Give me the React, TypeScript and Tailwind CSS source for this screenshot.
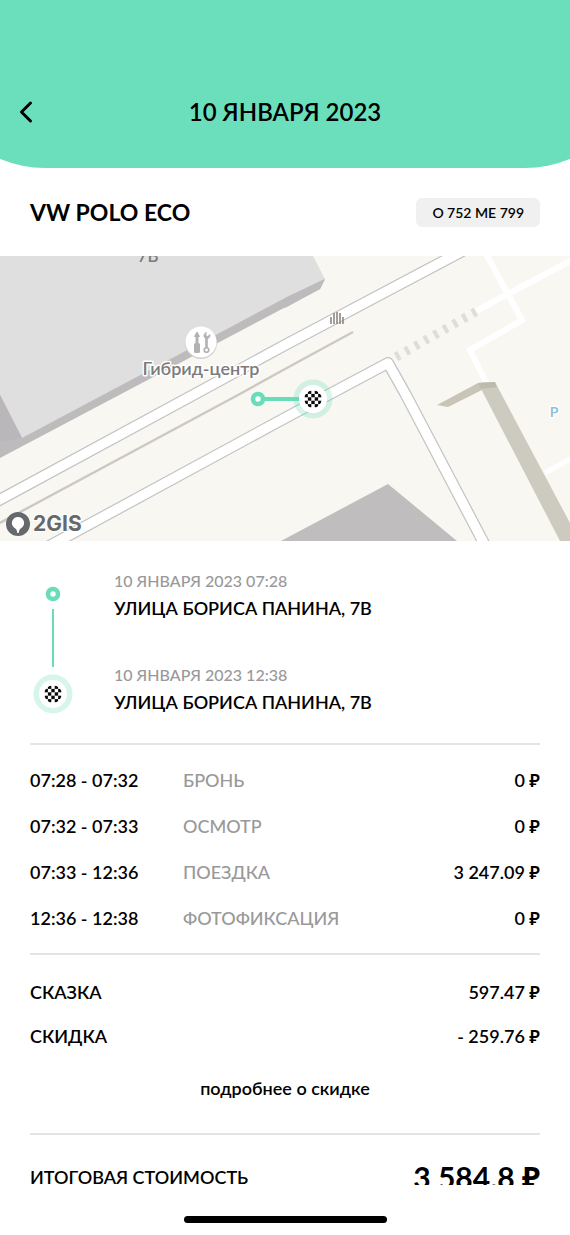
import { ChevronLeft } from "lucide-react";

const periods = [
  { time: "07:28 - 07:32", name: "БРОНЬ", price: "0 ₽" },
  { time: "07:32 - 07:33", name: "ОСМОТР", price: "0 ₽" },
  { time: "07:33 - 12:36", name: "ПОЕЗДКА", price: "3 247.09 ₽" },
  { time: "12:36 - 12:38", name: "ФОТОФИКСАЦИЯ", price: "0 ₽" },
];

const extras = [
  { name: "СКАЗКА", price: "597.47 ₽" },
  { name: "СКИДКА", price: "- 259.76 ₽" },
];

// checkered finish ball, drawn around 0,0
function FinishMark({ id }: { id: string }) {
  const cells = [];
  for (let row = 0; row < 5; row++) {
    for (let col = 0; col < 5; col++) {
      if ((row + col) % 2 === 1) {
        cells.push(
          <rect key={`${row}-${col}`} x={col * 3.4 - 8.5} y={row * 3.4 - 8.5} width="3.4" height="3.4" />
        );
      }
    }
  }
  return (
    <g>
      <circle r="19.5" fill="#6bdfbc" fillOpacity="0.28" />
      <circle r="14" fill="#fff" />
      <clipPath id={id}>
        <circle r="8.8" />
      </clipPath>
      <g clipPath={`url(#${id})`} fill="#0b0b0b">
        {cells}
      </g>
    </g>
  );
}

function TripMap() {
  return (
    <svg
      className="block h-[285px] w-full bg-[#f8f7f2]"
      viewBox="0 0 570 285"
      preserveAspectRatio="xMidYMid slice"
      role="img"
      aria-label="Карта поездки"
    >
      <rect width="570" height="285" fill="#f8f7f2" />

      {/* buildings */}
      <path d="M0 130 325 23 320 33 0 202Z" fill="#bdbbbc" />
      <path d="M0 0H313L325 23 285 42 22 182 0 139Z" fill="#dfdfdf" />
      <path d="M0 139 22 182 0 186Z" fill="#b9b7b9" />
      <path d="M285 42 325 23 320 33 285 52Z" fill="#bdbbbd" />
      <path d="M281 285 388 228 457 285Z" fill="#bfbdbe" />

      {/* footpaths */}
      <g fill="none" stroke="#fff" strokeWidth="6">
        <path d="M486-2 522 64 470 94 488 130" />
        <path d="M476 55 508 38 572 4" />
        <path d="M545 217 572 202" strokeWidth="5" />
      </g>
      <path d="M396 101 477 55" stroke="#dfddda" strokeWidth="9" strokeDasharray="4 7" />

      {/* roads */}
      <path d="M-4 269 238 139 285 113 353 76" fill="none" stroke="#cdc8c1" strokeWidth="2.4" />
      <g fill="none" strokeLinejoin="round">
        <path d="M-10 249 195 138 285 89 472-10M40 295 285 162 388 107 406 139 488 295" stroke="#c3c2c4" strokeWidth="12" />
        <path d="M-10 249 195 138 285 89 472-10M40 295 285 162 388 107 406 139 488 295" stroke="#fff" strokeWidth="9.6" />
      </g>

      {/* fence */}
      <path d="M437 149 478 127 495 126 482 134 448 151Z" fill="#c8c5b8" />
      <path d="M478 127 495 126 570 267V285H560Z" fill="#cdcbbf" />
      <path d="M478 127 495 126 497 131 481 133Z" fill="#bdbaae" />

      <g stroke="#8f8681" strokeWidth="1.6">
        <path d="M331 61V68M334 57V68M337 56V68M340 57V68M343 61V68" />
      </g>

      {/* car service */}
      <circle cx="201" cy="87" r="16" fill="#cfcfcf" />
      <circle cx="201" cy="86" r="15.5" fill="#fff" />
      <g fill="#b3b1b1" stroke="#b3b1b1">
        <path d="M197 76 199.5 80.5H198V87H196V80.5H194.5Z" strokeWidth="1" />
        <rect x="194" y="87" width="6" height="10" rx="1.5" stroke="none" />
        <path d="M206.5 82V92" strokeWidth="2.6" />
        <circle cx="206.5" cy="94" r="2.3" fill="#fff" strokeWidth="1.6" />
        <path d="M206.5 76.5C203.5 77 203 81 205.5 82.5H208C209.8 81.5 210.3 80 210 78.5L207.5 80.5 205.8 79Z" strokeWidth="0.6" />
      </g>
      <g fontFamily="Lato, 'Noto Sans', sans-serif" fill="#7d7b7c">
        <text x="201" y="119" fontSize="18" fontWeight="600" textAnchor="middle" stroke="#fff" strokeWidth="3" paintOrder="stroke" strokeLinejoin="round">
          Гибрид-центр
        </text>
        <text x="148" y="6" fontSize="17" textAnchor="middle">7В</text>
        <text x="554" y="161" fontSize="14" fontWeight="700" textAnchor="middle" fill="#90bfdc" stroke="#fff" strokeWidth="3" paintOrder="stroke">P</text>
      </g>

      {/* trip track */}
      <path d="M258 143H300" stroke="#6bdcb9" strokeWidth="4" />
      <circle cx="258" cy="143" r="5" fill="#fff" stroke="#6bdcb9" strokeWidth="4.6" />
      <g transform="translate(313 143)">
        <FinishMark id="map-finish" />
      </g>

      {/* 2GIS */}
      <circle cx="18" cy="268" r="12" fill="#65696b" />
      <path d="M18 261A6 6 0 0 0 14 271.5C16 272.6 17 274 17.3 277H18.7C19 274 20 272.6 22 271.5A6 6 0 0 0 18 261Z" fill="#fff" />
      <text x="33" y="275" fontSize="21" fontWeight="700" fontFamily="Inter, sans-serif" fill="#65696b" stroke="#fff" strokeWidth="2" paintOrder="stroke">
        2GIS
      </text>
    </svg>
  );
}

export default function App() {
  return (
    <div className="overflow-hidden bg-white font-[Lato,'Noto_Sans',sans-serif] text-lg leading-6 font-semibold text-black">
      <header className="-mx-[72px] rounded-b-[117px] bg-[#6bdfbc] px-[72px] pt-[92px] pb-9">
        <div className="grid h-10 grid-cols-[56px_1fr_56px] items-center">
          <button type="button" aria-label="Назад" className="flex h-10 items-center pl-2">
            <ChevronLeft size={36} strokeWidth={2} />
          </button>
          <h1 className="text-center text-2xl">10 ЯНВАРЯ 2023</h1>
        </div>
      </header>

      <section className="flex h-[88px] items-center justify-between px-[30px]">
        <h2 className="text-[23px] font-bold">VW POLO ECO</h2>
        <span className="rounded-md bg-[#f0f0f0] px-4 py-1 text-sm leading-[21px]">О 752 МЕ 799</span>
      </section>

      <TripMap />

      <main className="px-[30px]">
        <section className="flex gap-[38px] border-b-2 border-[#e4e4e4] pt-7 pb-7">
          <svg className="w-[46px] shrink-0" height="146" viewBox="0 0 46 146" aria-hidden="true">
            <circle cx="23" cy="25" r="5" fill="#fff" stroke="#6bdcb9" strokeWidth="4.6" />
            <path d="M23 40V98" stroke="#6bdcb9" strokeWidth="2" />
            <g transform="translate(23 125)">
              <FinishMark id="list-finish" />
            </g>
          </svg>
          <ol className="space-y-[43px]">
            <li>
              <p className="text-base leading-6 font-medium text-[#999]">10 ЯНВАРЯ 2023 07:28</p>
              <p className="pt-[3px]">УЛИЦА БОРИСА ПАНИНА, 7В</p>
            </li>
            <li>
              <p className="text-base leading-6 font-medium text-[#999]">10 ЯНВАРЯ 2023 12:38</p>
              <p className="pt-[3px]">УЛИЦА БОРИСА ПАНИНА, 7В</p>
            </li>
          </ol>
        </section>

        <section className="border-b-2 border-[#e4e4e4] py-3">
          <table className="w-full">
            <tbody>
              {periods.map((period) => (
                <tr key={period.time} className="h-[46px]">
                  <td className="w-[153px]">{period.time}</td>
                  <td className="font-medium text-[#999]">{period.name}</td>
                  <td className="text-right">{period.price}</td>
                </tr>
              ))}
            </tbody>
          </table>
        </section>

        <section className="border-b-2 border-[#e4e4e4] pt-[15px] pb-[33px]">
          <dl>
            {extras.map((item) => (
              <div key={item.name} className="flex h-11 items-center justify-between">
                <dt>{item.name}</dt>
                <dd>{item.price}</dd>
              </div>
            ))}
          </dl>
          <div className="pt-[18px] text-center">
            <a href="#discount">подробнее о скидке</a>
          </div>
        </section>

        <section className="flex h-[50px] items-start justify-between overflow-hidden pt-[30px]">
          <p>ИТОГОВАЯ СТОИМОСТЬ</p>
          <p className="text-3xl leading-6 font-bold">3 584.8 ₽</p>
        </section>
      </main>

      <footer className="flex justify-center pt-[31px] pb-3">
        <div className="h-[7px] w-[203px] rounded-full bg-black" />
      </footer>
    </div>
  );
}
